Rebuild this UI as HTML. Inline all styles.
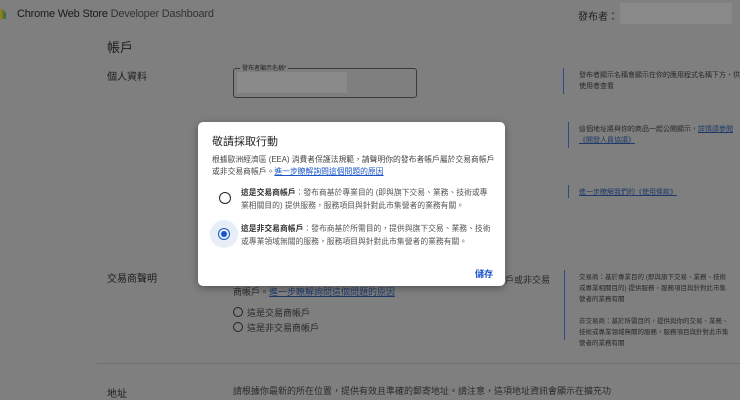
<!DOCTYPE html>
<html><head><meta charset="utf-8"><style>
*{margin:0;padding:0;box-sizing:border-box}
body{width:740px;height:400px;overflow:hidden;background:#7f7f7f;font-family:"Liberation Sans","Noto Sans CJK TC",sans-serif;color:#1c1c1c;position:relative}
.a{position:absolute;white-space:nowrap}
.s{font-size:8px;color:#2a2a2a}
.l{color:#1d3a6a;text-decoration:underline}
.bar{position:absolute;width:1px;background:#2a4a8a}
.r{position:absolute;width:10px;height:10px;border:1px solid #222;border-radius:50%}
.dlg{position:absolute;left:198px;top:122px;width:307px;height:164px;background:#fff;border-radius:5px;box-shadow:0 2px 8px rgba(0,0,0,.35)}
</style></head><body>
<div class="a" style="left:-6px;top:9px;width:12px;height:10px;border-radius:6px 6px 0 0;background:linear-gradient(90deg,#8a2a20,#a08020,#2a6a3a)"></div>
<div class="a" style="left:17px;top:8px;font-size:11px;letter-spacing:-0.2px;color:#1a1a1a">Chrome Web Store <span style="color:#333">Developer Dashboard</span></div>
<div class="a" style="left:578px;top:8px;font-size:10px;color:#222">發布者：</div>
<div class="a" style="left:620px;top:3px;width:112px;height:21px;background:#898989"></div>
<div class="a" style="left:107px;top:37px;font-size:13px">帳戶</div>
<div class="a" style="left:107px;top:68px;font-size:10px">個人資料</div>
<div class="a" style="left:233px;top:68px;width:184px;height:30px;border:1px solid #3a3a3a;border-radius:3px"></div>
<div class="a" style="left:240px;top:63px;font-size:6px;background:#7f7f7f;padding:0 2px;color:#222">發布者顯示名稱*</div>
<div class="a" style="left:237px;top:72px;width:110px;height:21px;background:#8a8a8a"></div>
<div class="bar" style="left:563px;top:68px;height:26px"></div>
<div class="a s" style="left:579px;top:70px;line-height:11px;font-size:7px">發布者顯示名稱會顯示在你的應用程式名稱下方，供<br>使用者查看</div>
<div class="bar" style="left:568px;top:122px;height:26px"></div>
<div class="a s" style="left:579px;top:124px;line-height:11px;font-size:7px">這個地址將與你的商品一起公開顯示，<span class="l">詳情請參閱</span><br><span class="l">《開發人員協議》</span></div>
<div class="bar" style="left:568px;top:185px;height:13px"></div>
<div class="a s l" style="left:579px;top:187px;font-size:7px">進一步瞭解我們的《使用條款》</div>
<div class="a" style="left:107px;top:270px;font-size:10px">交易商聲明</div>
<div class="a s" style="left:505px;top:273px;font-size:9px">戶或非交易</div>
<div class="a s" style="left:233px;top:285px;font-size:9px">商帳戶。<span class="l">進一步瞭解詢問這個問題的原因</span></div>
<div class="r" style="left:233px;top:307px"></div><div class="a s" style="left:247px;top:306px;font-size:9px">這是交易商帳戶</div>
<div class="r" style="left:233px;top:322px"></div><div class="a s" style="left:247px;top:321px;font-size:9px">這是非交易商帳戶</div>
<div class="bar" style="left:564px;top:270px;height:70px"></div>
<div class="a s" style="left:579px;top:272px;line-height:11px;font-size:6.5px">交易商：基於專業目的 (即與旗下交易、業務、技術<br>或專業相關目的) 提供服務，服務項目與針對此市集<br>營者的業務有關<br><br>非交易商：基於所需目的，提供與你的交易、業務、<br>技術或專業領域無關的服務，服務項目與針對此市集<br>營者的業務有關</div>
<div class="a" style="left:97px;top:363px;width:643px;height:1px;background:#707070"></div>
<div class="a" style="left:107px;top:385px;font-size:10px">地址</div>
<div class="a s" style="left:233px;top:384px;font-size:9px">請根據你最新的所在位置，提供有效且準確的郵寄地址。請注意，這項地址資訊會顯示在擴充功</div>
<div class="dlg">
<div class="a" style="left:14px;top:11px;font-size:11px;color:#202124">敬請採取行動</div>
<div class="a" style="left:14px;top:32px;font-size:7.8px;line-height:12px;color:#444">根據歐洲經濟區 (EEA) 消費者保護法規範，請聲明你的發布者帳戶屬於交易商帳戶<br>或非交易商帳戶。<span style="color:#1a55c8;text-decoration:underline">進一步瞭解詢問這個問題的原因</span></div>
<div class="r" style="left:21px;top:70px;width:12px;height:12px;border:1.5px solid #222"></div>
<div class="a" style="left:43px;top:64px;font-size:7.8px;line-height:13px;color:#555"><b style="color:#333">這是交易商帳戶</b>：發布商基於專業目的 (即與旗下交易、業務、技術或專<br>業相關目的) 提供服務，服務項目與針對此市集營者的業務有關。</div>
<div class="a" style="left:12px;top:98px;width:28px;height:28px;border-radius:50%;background:#e8eef8"></div>
<div class="r" style="left:20px;top:106px;width:12px;height:12px;border:1.5px solid #1a55c8"></div>
<div class="a" style="left:23px;top:109px;width:6px;height:6px;border-radius:50%;background:#1a55c8"></div>
<div class="a" style="left:43px;top:100px;font-size:7.8px;line-height:13px;color:#555"><b style="color:#333">這是非交易商帳戶</b>：發布商基於所需目的，提供與旗下交易、業務、技術<br>或專業領域無關的服務，服務項目與針對此市集營者的業務有關。</div>
<div class="a" style="left:277px;top:145px;font-size:9px;color:#1a55c8;font-weight:bold">儲存</div>
</div>
</body></html>
